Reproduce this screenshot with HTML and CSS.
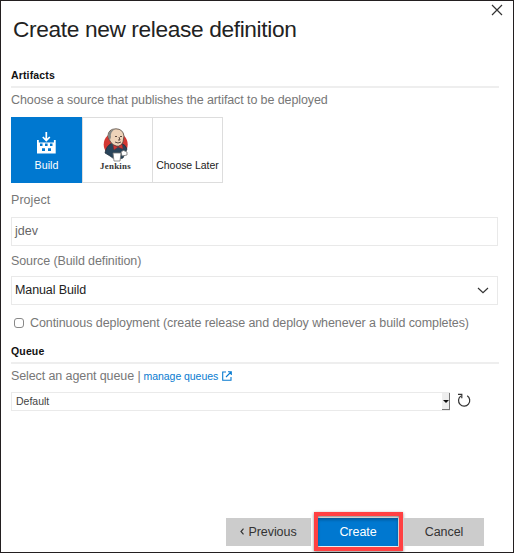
FILE: index.html
```html
<!DOCTYPE html>
<html lang="en">
<head>
<meta charset="utf-8">
<title>Create new release definition</title>
<link rel="stylesheet" href="styles.css">
</head>
<body>
<main class="dialog">
  <button class="close" aria-label="Close"><svg width="12" height="12" viewBox="0 0 12 12"><path d="M1 1 11 11M11 1 1 11"/></svg></button>
  <h1>Create new release definition</h1>
  <h2>Artifacts</h2>
  <p class="label choose">Choose a source that publishes the artifact to be deployed</p>
  <div class="tiles">
    <div class="tile selected">
      <svg class="build-icon" width="19" height="23" viewBox="0 0 19 23">
        <path class="arrow" d="M9.3 0V8M5.8 5 9.3 8.5 12.8 5"/>
        <path fill-rule="evenodd" d="M0 8H1.8V10.5H16.9V8H18.7V21.5H0ZM3 11.5V14H5.5V11.5ZM8 11.5V14H10.6V11.5ZM13 11.5V14H15.5V11.5ZM5 16.3V19H8V16.3ZM11 16.3V19H14V16.3Z"/>
      </svg>
      <span>Build</span>
    </div>
    <div class="tile jenkins">
      <svg width="26" height="34" viewBox="0 0 26 34">
        <ellipse cx="12.7" cy="16.5" rx="12" ry="12" fill="#d33833"/>
        <path d="M2 25Q3 18 9 15L18 15Q23 17 24 21L20 30Q12 33 7 28Z" fill="#29445a" stroke="#202c38" stroke-width=".7"/>
        <path d="M5 8Q5 1 13 .8 20 1 21 8L20 14Q18 19 13 18 7 16 5 8Z" fill="#eed3b9" stroke="#51443c" stroke-width=".8"/>
        <path d="M5 9Q5 2 12 1 7 4 8 9L7 12Z" fill="#858784"/>
        <path d="M12 8.5H14M17 8.5H19M16 9 17 12 15 12M12 14Q15 16 18 14" fill="none" stroke="#4a3831" stroke-width=".9"/>
        <path d="M10 17 15 19 19 16 20 21 15 19 11 22Z" fill="#d33833" stroke="#752e32" stroke-width=".5"/>
        <path d="M10 25H18L17 33H11Z" fill="#fff" stroke="#777" stroke-width=".8"/>
        <path d="M18 24Q20 21 24 24L24 27 19 28Z" fill="#fff" stroke="#666" stroke-width=".7"/>
      </svg>
      <span>Jenkins</span>
    </div>
    <div class="tile later"><span>Choose Later</span></div>
  </div>
  <label class="label project">Project</label>
  <div class="field project-field">jdev</div>
  <label class="label source">Source (Build definition)</label>
  <div class="field source-field"><span>Manual Build</span><svg width="12" height="7" viewBox="0 0 12 7"><path d="M1 1 6 5.7 11 1"/></svg></div>
  <label class="check"><i></i><span>Continuous deployment (create release and deploy whenever a build completes)</span></label>
  <h2 class="queue">Queue</h2>
  <p class="label agent"><span>Select an agent queue |</span><a>manage queues</a><svg width="10" height="10" viewBox="0 0 10 10"><path d="M4 1H.7V9.3H9V6M6 .7H9.3V4M9 1 4 6"/></svg></p>
  <div class="agent-row">
    <div class="select"><span>Default</span><i></i></div>
    <svg width="14" height="15" viewBox="0 0 14 15"><path d="M10.2 2.8A5.6 5.6 0 1 1 3.8 3M1 1.4H4.8V5.2"/></svg>
  </div>
  <footer>
    <button class="btn previous"><svg width="4" height="7" viewBox="0 0 4 7"><path d="M3.5.7 1 3.5 3.5 6.3"/></svg>Previous</button>
    <div class="highlight"><button class="btn create">Create</button></div>
    <button class="btn cancel">Cancel</button>
  </footer>
</main>
</body>
</html>
```
FILE: styles.css
```css
* { box-sizing: border-box; }
body { margin: 0; background: #fff; font-family: "Liberation Sans", Arial, sans-serif; color: #222; }
h1, h2, p { margin: 0; }
button { border: 0; padding: 0; font-family: inherit; }
svg { flex: none; fill: none; stroke: #333; stroke-width: 1.2; }
.dialog { position: relative; display: flex; flex-direction: column; width: 514px; height: 553px; padding: 14px 14px 0 10px; border: 1px solid #231f20; }
.close { position: absolute; left: 490px; top: 3px; width: 12px; height: 12px; background: none; }
.close svg { display: block; }
h1 { height: 28px; padding-left: 2px; font-size: 22.7px; font-weight: 400; line-height: 28px; letter-spacing: -.36px; white-space: nowrap; }
h2 { width: 488px; height: 20px; margin-top: 25px; border-bottom: 2px solid #eee; font-size: 10.5px; line-height: 14px; letter-spacing: .15px; color: #111; }
.label { display: block; height: 16px; font-size: 12.5px; line-height: 16px; letter-spacing: -.1px; color: #777; white-space: nowrap; }
.choose { margin-top: 4px; }
.tiles { display: flex; width: 212px; height: 66px; margin-top: 9px; border: 1px solid #ddd; }
.tile { display: flex; flex-direction: column; align-items: center; justify-content: flex-end; width: 70px; padding-bottom: 10px; border-left: 1px solid #ddd; font-size: 10.7px; line-height: 13px; white-space: nowrap; }
.tile.selected { width: 71px; margin: -1px 0 -1px -1px; padding-bottom: 11px; background: #0078d0; border: 0; color: #fff; }
.later { font-size: 10.5px; letter-spacing: -.05px; }
.build-icon { margin-bottom: 4px; fill: #fff; stroke: none; }
.build-icon .arrow { fill: none; stroke: #fff; stroke-width: 1.7; }
.tile.jenkins { padding: 0 4px 10px 0; font: bold 8.9px/11px "Liberation Serif", serif; letter-spacing: .25px; color: #333; }
.jenkins svg { stroke: none; margin-bottom: -1px; }
.project { margin-top: 9px; letter-spacing: .05px; }
.field { display: flex; align-items: center; justify-content: space-between; width: 487px; height: 29px; border: 1px solid #e9e9e9; padding: 0 8px 1px 3px; font-size: 12.5px; color: #666; }
.project-field { margin-top: 9px; }
.source { margin-top: 7px; }
.source-field { margin-top: 7px; color: #222; letter-spacing: -.1px; }
.check { display: flex; align-items: center; height: 16px; margin-top: 10px; padding-left: 3px; font-size: 12.5px; color: #777; letter-spacing: -.085px; white-space: nowrap; }
.check i { width: 10px; height: 10px; margin-right: 6px; border: 1px solid #888; border-radius: 3px; }
.queue { margin-top: 13px; }
.agent { display: flex; align-items: center; margin-top: 4px; }
.agent a { margin-left: 3px; color: #087bd0; font-size: 10.5px; letter-spacing: -.05px; }
.agent svg { margin-left: 4px; stroke: #087bd0; stroke-width: 1.1; }
.agent-row { display: flex; align-items: center; height: 19px; margin-top: 8px; }
.select { display: flex; align-items: center; justify-content: space-between; width: 439px; height: 19px; padding-left: 4px; border: 1px solid #eaeaea; border-right: 0; font-size: 10.5px; color: #444; }
.select span { margin-top: -1px; }
.select i { display: flex; align-items: center; justify-content: center; width: 8px; height: 17px; background: #eee; border-right: 1px solid #777; border-bottom: 1px solid #777; }
.select i::after { content: ""; border: 3px solid transparent; border-top: 3px solid #111; border-bottom: 0; }
.agent-row svg { margin-left: 7px; margin-top: -2px; }
footer { display: flex; align-items: center; height: 39px; margin: 101px 0 0 215px; }
.btn { display: flex; align-items: center; justify-content: center; height: 28px; background: #ccc; font-size: 12.5px; color: #333; letter-spacing: -.05px; }
.previous { width: 85px; gap: 4px; }
.highlight { width: 89px; height: 39px; margin-left: 3px; padding: 2px 0 0; border: 4px solid #ff4042; box-shadow: 0 1px 3px #0007, inset 0 1px 3px #0008; }
.highlight .create { width: 80px; background: #0078d0; color: #fff; box-shadow: inset 0 2px 3px #0004; }
.cancel { width: 80px; margin-left: 1px; }
```
